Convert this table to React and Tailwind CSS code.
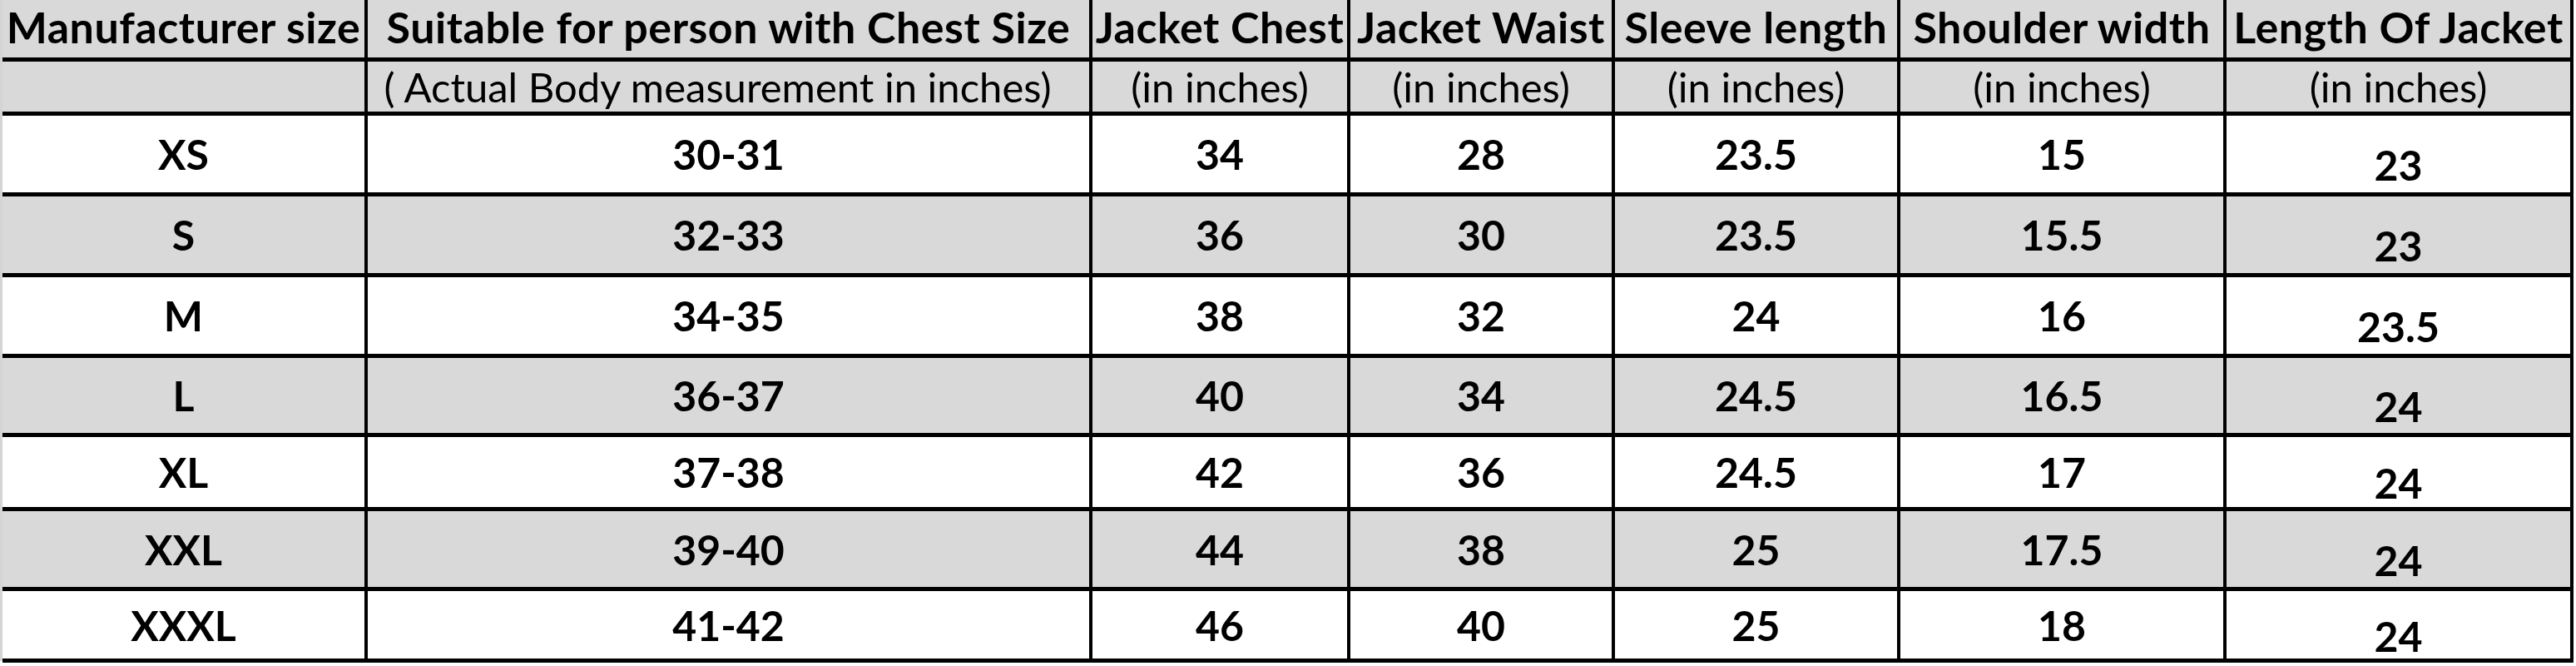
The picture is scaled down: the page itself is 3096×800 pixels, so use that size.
import React from "react";

const cols = ["w-[439px]", "w-[871px]", "w-[310px]", "w-[318px]", "w-[343px]", "w-[392px]", "w-[417px]"];

const head1 = ["Manufacturer size", "Suitable for person with Chest Size", "Jacket Chest", "Jacket Waist", "Sleeve length", "Shoulder width", "Length Of Jacket"];
const head2 = ["", "( Actual Body measurement in inches)", "(in inches)", "(in inches)", "(in inches)", "(in inches)", "(in inches)"];

const rows = [
  { h: "h-[97px]", gray: false, v: ["XS", "30-31", "34", "28", "23.5", "15", "23"] },
  { h: "h-[97px]", gray: true, v: ["S", "32-33", "36", "30", "23.5", "15.5", "23"] },
  { h: "h-[97px]", gray: false, v: ["M", "34-35", "38", "32", "24", "16", "23.5"] },
  { h: "h-[95px]", gray: true, v: ["L", "36-37", "40", "34", "24.5", "16.5", "24"] },
  { h: "h-[89px]", gray: false, v: ["XL", "37-38", "42", "36", "24.5", "17", "24"] },
  { h: "h-[96px]", gray: true, v: ["XXL", "39-40", "44", "38", "25", "17.5", "24"] },
  { h: "h-[86px]", gray: false, v: ["XXXL", "41-42", "46", "40", "25", "18", "24"] },
];

export default function App() {
  return (
    <div className="w-[3096px] h-[800px] bg-white flex" style={{ fontFamily: "Lato, 'Open Sans', sans-serif" }}>
      <div className="w-[3px] h-[794px] bg-[#d4d4d4]" />
      <div className="flex flex-col text-black">
        <div className="flex h-[74px] bg-[#d9d9d9]">
          {head1.map((t, i) => (
            <div key={i} className={`${cols[i]} h-full border-r-[4px] border-b-[5px] border-black flex items-end justify-center pb-[11px] text-[52px] font-bold leading-none tracking-[0.01em] whitespace-nowrap`}>
              {t}
            </div>
          ))}
        </div>
        <div className="flex h-[65px] bg-[#d9d9d9]">
          {head2.map((t, i) => (
            <div key={i} className={`${cols[i]} h-full border-r-[4px] border-b-[5px] border-black flex items-center justify-center text-[49px] font-normal leading-none whitespace-nowrap ${i === 1 ? "pr-[26px]" : ""}`}>
              {t}
            </div>
          ))}
        </div>
        {rows.map((r, ri) => (
          <div key={ri} className={`flex ${r.h} ${r.gray ? "bg-[#d9d9d9]" : "bg-white"}`}>
            {r.v.map((t, i) => (
              <div key={i} className={`${cols[i]} h-full border-r-[4px] border-b-[5px] border-black flex items-center justify-center text-[50px] font-bold leading-none ${i === 6 ? "pt-[26px]" : ""}`}>
                {t}
              </div>
            ))}
          </div>
        ))}
      </div>
    </div>
  );
}
